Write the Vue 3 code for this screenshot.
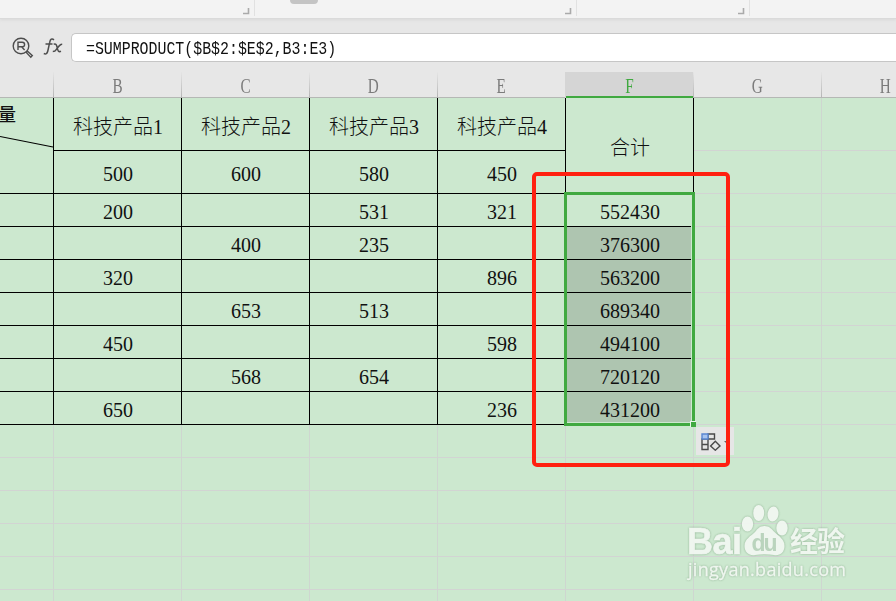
<template>
    <div class="sheet-app">
        <div class="ribbon">
            <div v-for="(group, i) in ribbonGroups" :key="group" class="ribbon-group" :class="'group-' + i">
                <span v-if="i === 1" class="ribbon-tab"></span>
                <svg v-if="i < 3" class="launcher" viewBox="0 0 7 7">
                    <path d="M5.5 0V5.5H0" />
                </svg>
            </div>
        </div>
        <div class="formula-bar">
            <svg class="search-icon" viewBox="0 0 22 22">
                <circle cx="9" cy="9" r="7.8" />
                <path d="M6 13V5.2h4.3a2.2 2.2 0 0 1 0 4.6H6M9.6 9.8l3 3.2" />
                <path d="M14.2 15.4l1.3-1.2 4.8 4.4-1.5 1.6z" />
            </svg>
            <svg class="fx-icon" viewBox="0 0 20 20">
                <path d="M11 2.8C8.800 1 7.300 2.200 6.700 5.400L4.800 14c-.6 2.600-1.900 3.500-4 2.500M2.500 7h7M10.700 7.300c2.200-.8 2.800.2 3.500 3.400.7 3.400 1.400 4.600 3.800 3.600M19.200 7.200c-2.500 0-4.500 3.200-5.800 5.200-.9 1.500-2 2.200-3.600 2.200" />
            </svg>
            <div class="formula-input"><span class="formula-text">{{ formula }}</span></div>
        </div>
        <div class="column-heads">
            <div v-for="col in columns" :key="col" class="column-head" :class="{ active: col === 'F' }">
                <span>{{ col }}</span>
            </div>
        </div>
        <div class="grid">
            <div class="cell corner ruled">
                <span class="corner-text">量</span>
                <svg class="slash" viewBox="0 0 54 96"><path d="M0 38.5L53 49" /></svg>
            </div>
            <div v-for="name in products" :key="name" class="cell ruled title">{{ name }}</div>
            <div class="cell ruled total-title">合计</div>
            <div class="cell"></div>
            <div class="cell"></div>
            <div v-for="(price, i) in prices" :key="'p' + i" class="cell ruled">{{ price }}</div>
            <div class="cell"></div>
            <div class="cell"></div>
            <template v-for="(row, r) in rows" :key="'r' + r">
                <div class="cell ruled"></div>
                <div v-for="(value, c) in row" :key="c" class="cell ruled"
                    :class="{ picked: c === 4 && r > 0 }">{{ value }}</div>
                <div class="cell"></div>
                <div class="cell"></div>
            </template>
            <div v-for="n in 48" :key="'e' + n" class="cell"></div>
        </div>

        <div class="selection"><span class="fill-handle"></span></div>
        <div class="fill-options">
            <svg class="fill-icon" viewBox="0 0 20 18">
                <path d="M7 1h6.500v5H7zM1 6h6v5.500H1zM1 11.500h6v5H1z" />
                <path class="blue" d="M1 1h6v5H1z" />
                <path d="M14.300 8.300l4.700 4.700-4.700 4.200L9.600 13z" />
            </svg>
            <span class="caret"></span>
        </div>
        <div class="highlight"></div>

        <div class="watermark">
            <div class="brand">
                <span class="bai">Bai</span>
                <svg class="paw" viewBox="0 0 50 54">
                    <ellipse cx="7.500" cy="21" rx="5.700" ry="7.500" />
                    <ellipse cx="18.700" cy="10" rx="5.500" ry="8" />
                    <ellipse cx="33" cy="11" rx="5.500" ry="7.500" transform="rotate(8 33 11)" />
                    <ellipse cx="42" cy="25" rx="5.700" ry="7.500" />
                    <path d="M24.500 23c-5 0-7 3-9.500 6-4 4-10.500 7-10.500 14 0 6.500 5 10 10.500 9 6-1 13-1 19 0 6 1 10.500-2.500 10.500-9 0-7-6-10-10-14-3-3-5-6-10-6z" />
                    <text x="24.500" y="48" text-anchor="middle" textLength="26">du</text>
                </svg>
                <span class="jingyan">经验</span>
            </div>
            <div class="site"><span>jingyan.baidu.com</span></div>
        </div>
    </div>
</template>

<script setup>
const formula = '=SUMPRODUCT($B$2:$E$2,B3:E3)';
const ribbonGroups = ['clipboard', 'font', 'align', 'number'];
const columns = ['A', 'B', 'C', 'D', 'E', 'F', 'G', 'H'];
const products = ['科技产品1', '科技产品2', '科技产品3', '科技产品4'];
const prices = [500, 600, 580, 450];

// B to F of each order line
const rows = [
    [200, '', 531, 321, 552430],
    ['', 400, 235, '', 376300],
    [320, '', '', 896, 563200],
    ['', 653, 513, '', 689340],
    [450, '', '', 598, 494100],
    ['', 568, 654, '', 720120],
    [650, '', '', 236, 431200]
];
</script>

<style>
body {
    overflow: hidden;
}
</style>

<style scoped>
.sheet-app {
    position: relative;
    width: 896px;
    height: 601px;
    overflow: hidden;
    background: #e7e7e7;
    font-family: "Liberation Serif", "Noto Sans CJK SC", serif;
}

.ribbon {
    display: flex;
    box-sizing: border-box;
    height: 19px;
    background: #f3f3f3;
    border-bottom: 1px solid #dadada;
    box-shadow: 0 1px 3px #d8d8d8;
}

.ribbon-group {
    position: relative;
    box-sizing: border-box;
    height: 16px;
    border-right: 1px solid #e1e1e1;
}

.group-0 { width: 255px; }
.group-1 { width: 322px; }
.group-2 { width: 173px; }
.group-3 { flex: 1; border: none; }

.launcher {
    position: absolute;
    right: 4px;
    top: 8px;
    width: 7px;
    height: 7px;
    fill: none;
    stroke: #aaa;
    stroke-width: 1.6;
}

.ribbon-tab {
    position: absolute;
    left: 35px;
    top: 0;
    width: 28px;
    height: 4px;
    background: #c4c4c4;
    border-radius: 0 0 4px 4px;
}

.formula-bar {
    display: flex;
    height: 53px;
    padding: 14px 0 0 12px;
    box-sizing: border-box;
}

.search-icon {
    width: 22px;
    height: 22px;
    margin-top: 4px;
    fill: none;
    stroke: #4d4d4d;
    stroke-width: 1.4;
}

.fx-icon {
    width: 20px;
    height: 20px;
    margin: 4px 8px 0 9px;
    fill: none;
    stroke: #4d4d4d;
    stroke-width: 1.5;
}

.formula-input {
    flex: 1;
    box-sizing: border-box;
    height: 29px;
    padding-left: 14px;
    background: #fff;
    border: 1px solid #c6c6c6;
    border-right: none;
    border-radius: 5px 0 0 5px;
}

.formula-text {
    display: inline-block;
    font-family: "Liberation Mono", monospace;
    font-size: 14.9px;
    line-height: 30px;
    color: #111;
    transform: scaleY(1.25);
}

.column-heads,
.grid {
    display: grid;
    grid-template-columns: 54px repeat(7, 128px);
    width: 950px;
}

.column-heads {
    height: 26px;
    grid-template-rows: 26px;
}

.column-head {
    box-sizing: border-box;
    height: 26px;
    border-right: 1px solid;
    border-image: linear-gradient(#e7e7e7, #b2b2b2) 1;
    box-shadow: inset 0 -1px #b5b8b5;
    color: #7b7b7b;
    font-size: 20px;
    line-height: 29px;
    text-align: center;
}

.column-head span {
    display: inline-block;
    transform: scaleX(0.76);
}

.column-head:first-child span {
    visibility: hidden;
}

.column-head.active {
    background: #d5d5d5;
    box-shadow: inset 0 -2px #40a940, -1px 0 #d5d5d5;
    color: #40a940;
}

.grid {
    grid-template-rows: 53px 43px;
    grid-auto-rows: 33px;
    background: #cce8cf;
}

.cell {
    box-sizing: border-box;
    padding: 4px 0 0 1px;
    border-right: 1px solid #ced6d0;
    border-bottom: 1px solid #d2d4d3;
    color: #111;
    font-size: 20px;
    line-height: 28px;
    text-align: center;
    display: flex;
    align-items: center;
    justify-content: center;
}

.ruled {
    border-color: #000;
}

.title {
    padding-top: 5px;
    font-weight: 300;
}

.corner,
.total-title {
    grid-row: span 2;
    font-weight: 300;
}

.corner {
    position: relative;
}

.corner-text {
    position: absolute;
    right: 37px;
    top: 3px;
    font-size: 18px;
    font-weight: 500;
}

.slash {
    position: absolute;
    left: 0;
    top: 0;
    width: 54px;
    height: 96px;
    fill: none;
    stroke: #000;
    stroke-width: 1.1;
}

.picked {
    background: #aec5b0;
}

.selection {
    position: absolute;
    left: 564px;
    top: 192px;
    width: 131px;
    height: 234px;
    box-sizing: border-box;
    border: 3px solid #40a940;
    box-shadow: inset -1px -1px #cce8cf;
}

.fill-handle {
    position: absolute;
    right: -4px;
    bottom: -4px;
    width: 5px;
    height: 5px;
    background: #40a940;
    border: 1px solid #e8f5e9;
    border-right: none;
    border-bottom: none;
}

.fill-options {
    position: absolute;
    left: 696px;
    top: 427px;
    display: flex;
    align-items: center;
    box-sizing: border-box;
    width: 38px;
    height: 28px;
    padding: 2px 0 0 5px;
    background: #e6e6e6;
}

.fill-icon {
    width: 20px;
    height: 18px;
    fill: none;
    stroke: #4a4a4a;
    stroke-width: 1.4;
}

.fill-icon .blue {
    fill: #a9c4ef;
    stroke: #5b87d2;
}

.caret {
    margin-left: 3px;
    border: 3px solid transparent;
    border-top-color: #666;
    border-bottom: none;
}

.highlight {
    position: absolute;
    left: 531.500px;
    top: 171.500px;
    width: 198px;
    height: 295px;
    box-sizing: border-box;
    border: 4px solid #ff2010;
    border-radius: 5px;
}

.watermark {
    position: absolute;
    left: 687px;
    top: 503px;
    width: 162px;
    color: #f3f8f3;
    font-family: "Open Sans", "Noto Sans CJK SC", sans-serif;
    filter: drop-shadow(0 0 1px rgba(110, 145, 112, 0.7));
    opacity: 0.9;
}

.brand {
    display: flex;
    height: 54px;
}

.bai {
    width: 53px;
    font-family: "Liberation Sans", sans-serif;
    font-size: 36px;
    font-weight: bold;
    line-height: 77px;
    letter-spacing: -0.5px;
    -webkit-text-stroke: 0.6px #f3f8f3;
}

.paw {
    width: 50px;
    height: 54px;
    fill: #f3f8f3;
}

.paw text {
    fill: #b9d2bc;
    font-family: "Liberation Sans", sans-serif;
    font-size: 23px;
    font-weight: bold;
}

.jingyan {
    font-size: 28px;
    font-weight: bold;
    line-height: 76px;
    letter-spacing: -1px;
    white-space: nowrap;
}

.site {
    padding-left: 1px;
    font-size: 18px;
    line-height: 24px;
    letter-spacing: 0.3px;
    -webkit-text-stroke: 0.3px #f3f8f3;
}
</style>
